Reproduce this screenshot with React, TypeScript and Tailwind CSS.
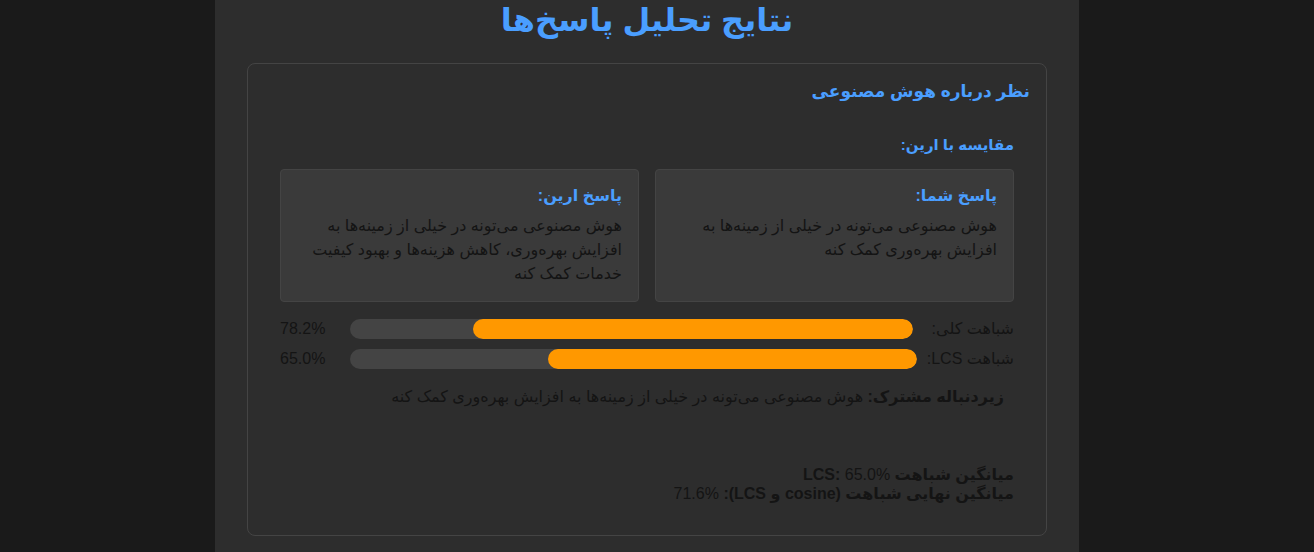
import React from 'react'

const font = { fontFamily: '"Liberation Sans", "DejaVu Sans", sans-serif' }

function Bar({ label, value, labelClass }: { label: string; value: number; labelClass?: string }) {
  return (
    <div className="flex items-center h-5 mb-[10px]">
      <span className={`text-[16px] text-[#141414] whitespace-nowrap ${labelClass ?? ''}`}>{label}</span>
      <div className="flex-1 mx-[10px] h-5 rounded-full bg-[#444] overflow-hidden">
        <div className="h-full bg-[#ff9800] rounded-full" style={{ width: `${value}%` }} />
      </div>
      <span className="w-[60px] text-left text-[16px] text-[#141414]">{value.toFixed(1)}%</span>
    </div>
  )
}

function AnswerBox({ title, text }: { title: string; text: string }) {
  return (
    <div className="bg-[#3a3a3a] border border-[#444] rounded-[4px] px-4 pt-4 pb-[15px]">
      <h5 className="text-[16px] font-bold text-[#4a9eff] leading-[19px] mb-[9px]">{title}</h5>
      <p className="text-[16px] leading-6 text-[#141414]">{text}</p>
    </div>
  )
}

export default function App() {
  return (
    <div dir="rtl" className="min-h-[552px] bg-[#1a1a1a] pr-5" style={font}>
      <div className="w-[864px] mx-auto bg-[#2d2d2d] px-8 pb-4 min-h-[552px]">
        <h1 className="text-[32px] font-bold text-[#4a9eff] text-center leading-[40px]">نتایج تحلیل پاسخ‌ها</h1>

        <div className="mt-[23px] border border-[#444] rounded-lg px-4 pt-[17px] pb-8">
          <h3 className="text-[17px] font-bold text-[#4a9eff] leading-[22px]">نظر درباره هوش مصنوعی</h3>

          <div className="px-4 mt-[32px]">
            <h4 className="text-[15px] font-bold text-[#4a9eff] leading-[19px] mb-[15px]">مقایسه با ارین:</h4>

            <div className="grid grid-cols-2 gap-4">
              <AnswerBox
                title="پاسخ شما:"
                text="هوش مصنوعی می‌تونه در خیلی از زمینه‌ها به افزایش بهره‌وری کمک کنه"
              />
              <AnswerBox
                title="پاسخ ارین:"
                text="هوش مصنوعی می‌تونه در خیلی از زمینه‌ها به افزایش بهره‌وری، کاهش هزینه‌ها و بهبود کیفیت خدمات کمک کنه"
              />
            </div>

            <div className="mt-[17px]">
              <Bar label="شباهت کلی:" value={78.2} labelClass="min-w-[91px]" />
              <Bar label="شباهت LCS:" value={65.0} />
            </div>

            <p className="mt-[16px] px-[10px] text-[16px] leading-6 text-[#141414]">
              <strong>زیردنباله مشترک:</strong> هوش مصنوعی می‌تونه در خیلی از زمینه‌ها به افزایش بهره‌وری کمک کنه
            </p>

            <div className="mt-[56px] text-[16px] leading-[19px] text-[#141414]">
              <p><strong>میانگین شباهت LCS:</strong> 65.0%</p>
              <p><strong>میانگین نهایی شباهت (cosine و LCS):</strong> 71.6%</p>
            </div>
          </div>
        </div>
      </div>
    </div>
  )
}
